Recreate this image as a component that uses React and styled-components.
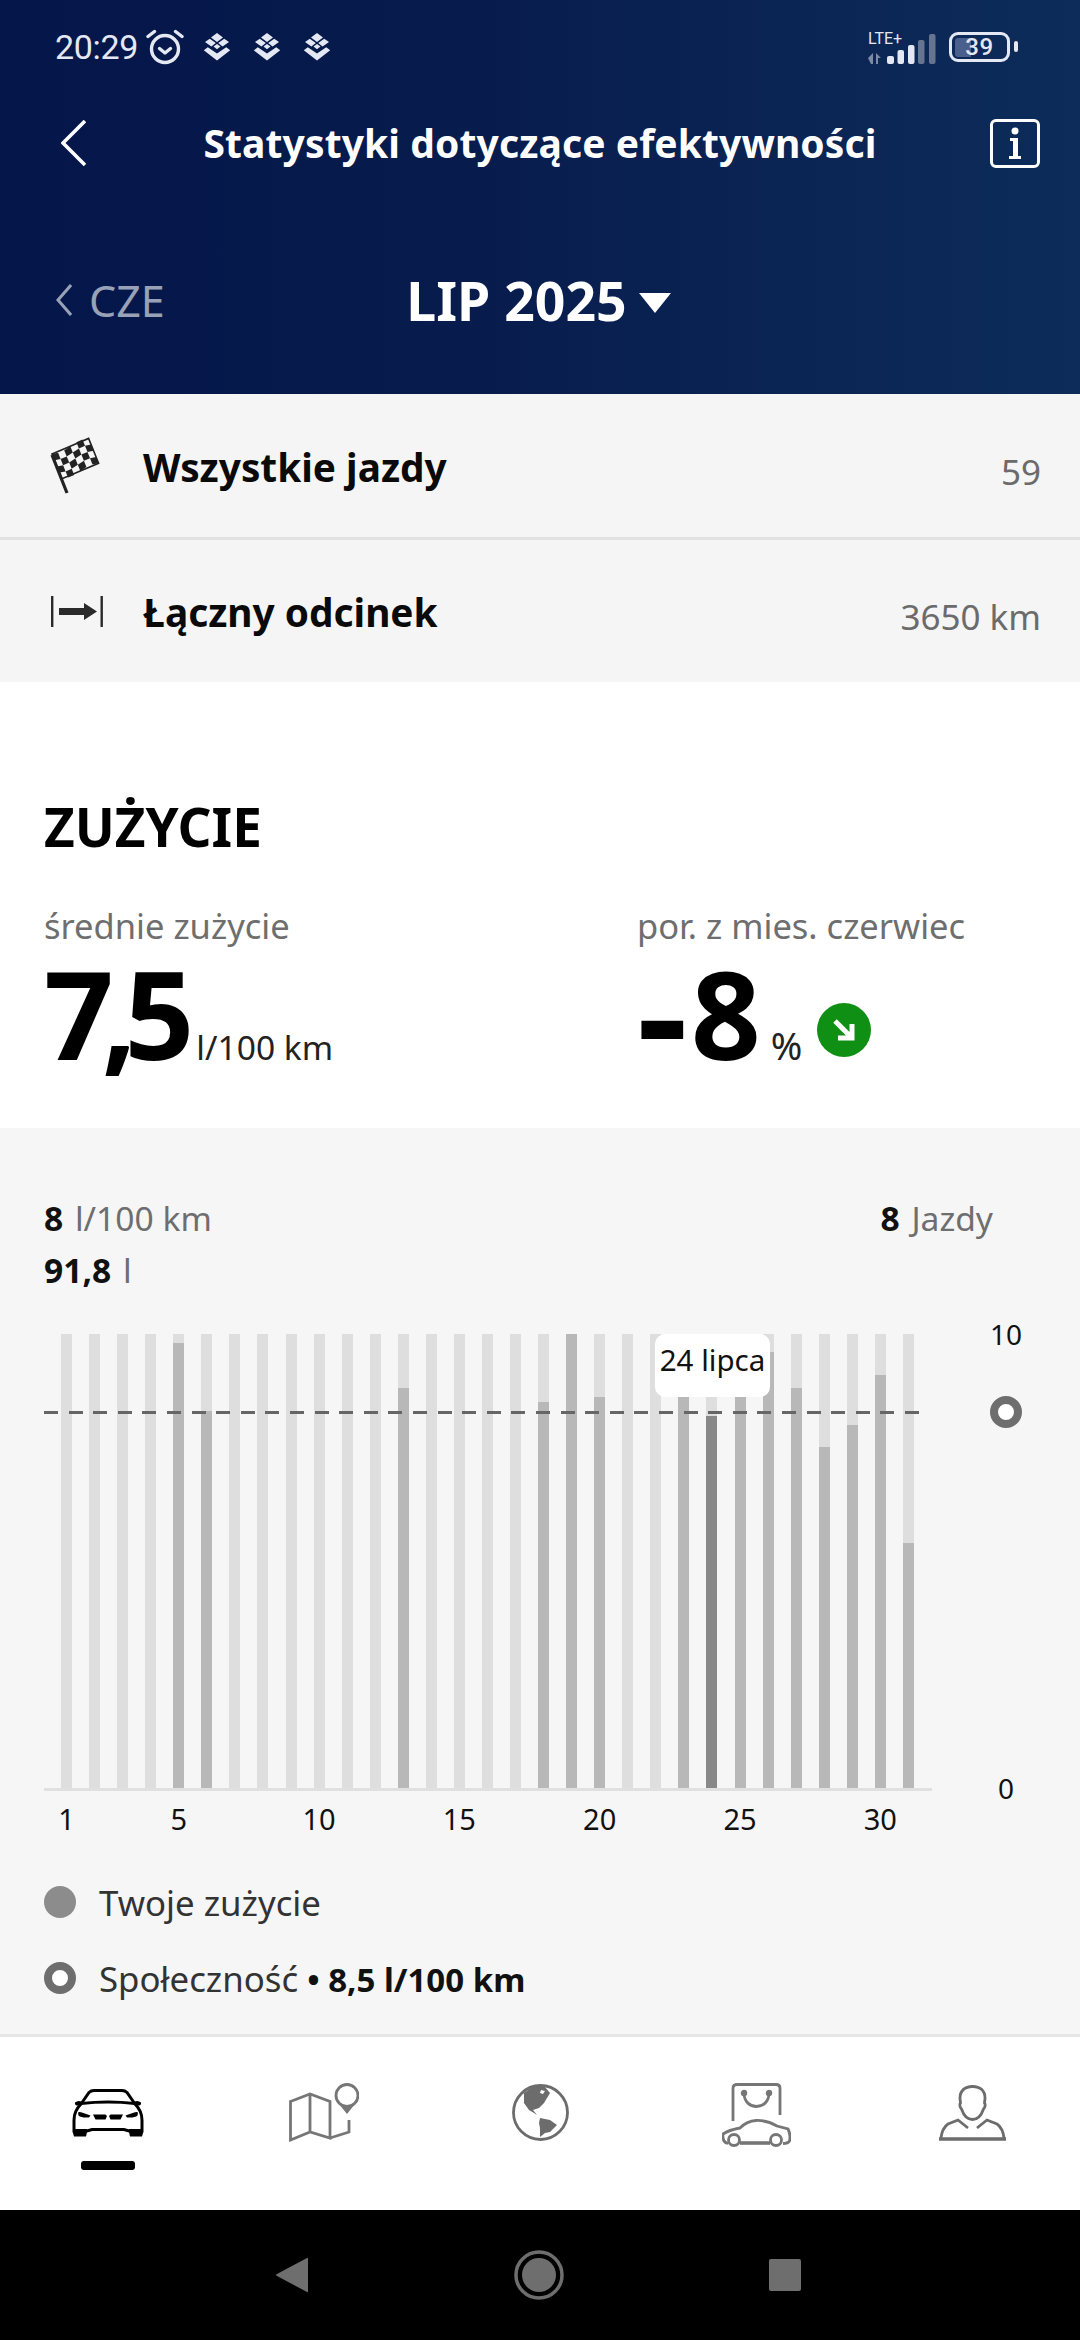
import React from "react";
import styled, { createGlobalStyle } from "styled-components";

const GlobalStyle = createGlobalStyle`
    html, body {
        margin: 0;
        padding: 0;
        background: #000;
    }
    * {
        box-sizing: border-box;
    }
    body {
        font-family: "Noto Sans", "Open Sans", sans-serif;
    }
`

const Pagina = styled.div`
    width: 1080px;
    height: 2340px;
    display: flex;
    flex-direction: column;
    background: #fff;
    overflow: hidden;
`

const Cabecalho = styled.header`
    height: 394px;
    background: linear-gradient(90deg, #05164a 0%, #071b4c 40%, #0d2c5a 100%);
    color: #fff;
    flex-shrink: 0;
`

const StatusBar = styled.div`
    height: 94px;
    padding: 0 70px 0 55px;
    display: flex;
    align-items: center;
    justify-content: space-between;
    color: #e4e8f2;
`

const StatusGroup = styled.div`
    display: flex;
    align-items: center;
`

const Hora = styled.span`
    font-family: Roboto, sans-serif;
    font-size: 34px;
    letter-spacing: -0.3px;
    margin-right: 8px;
`

const StackIcon = styled.svg`
    width: 28px;
    height: 28px;
    margin-left: ${({ $gap }) => $gap}px;
`

const Rede = styled.div`
    display: flex;
    flex-direction: column;
    width: 68px;
    margin-right: 13px;
`

const Lte = styled.span`
    font-family: Roboto, sans-serif;
    font-size: 16px;
    line-height: 15px;
`

const SinalDesenho = styled.svg`
    width: 68px;
    height: 30px;
    margin-top: -12px;
`

const Bateria = styled.div`
    position: relative;
    width: 61px;
    height: 30px;
    border: 3.5px solid #e4e8f2;
    border-radius: 9px;
    display: flex;
    align-items: center;
    justify-content: center;
    font-family: Roboto, sans-serif;
    font-size: 24px;
    font-weight: 500;
    letter-spacing: 0.5px;

    &::before {
        content: "";
        position: absolute;
        left: 2.5px;
        top: 2.5px;
        bottom: 2.5px;
        width: 16px;
        background: #4a5f8c;
        border-radius: 3px 0 0 3px;
    }

    &::after {
        content: "";
        position: absolute;
        right: -10.5px;
        top: 6px;
        width: 4px;
        height: 11px;
        background: #e4e8f2;
        border-radius: 2px;
    }

    span {
        position: relative;
    }
`

const TitleBar = styled.div`
    height: 98px;
    padding: 0 40px 0 40px;
    display: grid;
    grid-template-columns: 1fr auto 1fr;
    align-items: center;
`

const BotaoVoltar = styled.svg`
    margin-left: 21px;
`

const Titulo = styled.h1`
    margin: 0 0 2px;
    font-size: 39px;
    line-height: 1;
    font-weight: 700;
    letter-spacing: 0.1px;
    white-space: nowrap;
`

const InfoBox = styled.div`
    justify-self: end;
    width: 50px;
    height: 49px;
    border: 3px solid #fff;
    border-radius: 6px;
    display: flex;
    align-items: center;
    justify-content: center;
`

const MonthBar = styled.div`
    height: 110px;
    margin-top: 53px;
    padding: 0 56px;
    display: grid;
    grid-template-columns: 1fr auto 1fr;
    align-items: center;
`

const Anterior = styled.div`
    display: flex;
    align-items: center;
    gap: 17px;
    color: #98a1b6;
    font-size: 43px;
`

const MesAtual = styled.div`
    display: flex;
    align-items: center;
    gap: 12px;
    font-size: 53.5px;
    font-weight: 700;
    margin-left: -3px;
`

const Triangulo = styled.span`
    width: 0;
    height: 0;
    border-left: 16px solid transparent;
    border-right: 16px solid transparent;
    border-top: 20px solid #fff;
    margin-top: 6px;
`

const Linha = styled.div`
    height: ${({ $altura }) => $altura}px;
    background: #f5f5f5;
    border-bottom: ${({ $divisor }) => ($divisor ? "3px solid #e2e2e2" : "0")};
    padding: 0 39px 0 50px;
    display: grid;
    grid-template-columns: 93px 1fr auto;
    align-items: center;
    flex-shrink: 0;
`

const LinhaNome = styled.span`
    font-size: 38.8px;
    font-weight: 700;
    color: #0a0a0a;
    margin-top: 2px;
`

const LinhaValor = styled.span`
    font-size: 35px;
    color: #6b6b6b;
    margin-top: 11px;
`

const Consumo = styled.section`
    height: 446px;
    padding: 112px 0 0 44px;
    background: #fff;
    flex-shrink: 0;
`

const ConsumoTitulo = styled.h2`
    margin: 0 0 44px;
    font-size: 53px;
    line-height: 66px;
    font-weight: 700;
    color: #000;
`

const Metricas = styled.div`
    display: grid;
    grid-template-columns: 593px 1fr;
`

const MetricaRotulo = styled.div`
    font-size: 34.5px;
    line-height: 44px;
    color: #6e6e6e;
`

const MetricaLinha = styled.div`
    display: flex;
    align-items: baseline;
    height: 130px;
`

const MetricaNumero = styled.span`
    font-size: 122px;
    line-height: 130px;
    font-weight: 700;
    color: #000;
    letter-spacing: ${({ $aperto }) => $aperto}px;
`

const Menos = styled.span`
    display: inline-block;
    width: 54px;
    transform: scale(1.3, 1.2);
    transform-origin: left center;
`

const MetricaUnidade = styled.span`
    font-size: ${({ $tamanho }) => $tamanho}px;
    color: #222;
    margin-left: ${({ $margem }) => $margem}px;
`

const SetaVerde = styled.span`
    width: 54px;
    height: 54px;
    border-radius: 50%;
    background: #0f8f14;
    display: flex;
    align-items: center;
    justify-content: center;
    align-self: flex-start;
    margin-left: 15px;
    margin-top: 55px;
`

const Painel = styled.section`
    flex: 1;
    background: #f6f6f6;
    padding: 64px 0 0 44px;
`

const Resumo = styled.div`
    display: flex;
    justify-content: space-between;
    padding-right: 87px;
    font-size: 33.6px;
    line-height: 52px;
    color: #6e6e6e;

    b {
        color: #111;
        font-weight: 700;
        margin-right: 3px;
    }
`

const Grafico = styled.div`
    display: grid;
    grid-template-columns: 888px 1fr;
    margin-top: 38px;
`

const Area = styled.div`
    position: relative;
    height: 457px;
    padding-left: 17px;
    display: flex;
    gap: 17.07px;
    border-bottom: 3px solid #e0e0e0;
`

const Barra = styled.div`
    width: 11px;
    height: 454px;
    background: #dedede;
    display: flex;
    align-items: flex-end;
`

const Preenchimento = styled.div`
    width: 100%;
    background: ${({ $ativo }) => ($ativo ? "#888888" : "#b8b8b8")};
`

const Tracejado = styled.div`
    position: absolute;
    left: 0;
    right: 6px;
    top: 77px;
    height: 3px;
    background: repeating-linear-gradient(90deg, #666 0 14px, transparent 14px 24.6px);
`

const Dica = styled.div`
    position: absolute;
    left: 611px;
    top: 0;
    width: 115px;
    height: 63px;
    background: #fff;
    border-radius: 10px;
    display: flex;
    align-items: center;
    justify-content: center;
    font-size: 29.5px;
    color: #111;
    padding-bottom: 13px;
    white-space: nowrap;
`

const EixoY = styled.div`
    height: 454px;
    margin-left: 74px;
    width: 0;
    display: flex;
    flex-direction: column;
    align-items: center;
    font-size: 28px;
    color: #111;
`

const EixoRotulo = styled.span`
    height: 0;
    display: flex;
    align-items: center;
    white-space: nowrap;
    margin-top: ${({ $auto }) => ($auto ? "auto" : "0")};
`

const Anel = styled.span`
    flex-shrink: 0;
    width: 32px;
    height: 32px;
    margin-top: 62px;
    border-radius: 50%;
    border: 8.5px solid #6e6e6e;
    background: #fff;
`

const EixoX = styled.div`
    width: 888px;
    height: 73px;
    padding-left: 17px;
    display: flex;
    gap: 17.07px;
    font-size: 29px;
    color: #111;
`

const Marca = styled.div`
    width: 11px;
    display: flex;
    justify-content: center;
    line-height: 56px;
    white-space: nowrap;
`

const Legenda = styled.div`
    display: flex;
    align-items: center;
    gap: 23px;
    height: 76px;
    font-size: 34.8px;
    color: #333;

    b {
        color: #111;
        font-weight: 700;
        font-size: 33px;
    }
`

const Ponto = styled.span`
    width: 32px;
    height: 32px;
    border-radius: 50%;
    background: ${({ $anel }) => ($anel ? "#fff" : "#8c8c8c")};
    border: ${({ $anel }) => ($anel ? "8.5px solid #6e6e6e" : "0")};
`

const NavInferior = styled.nav`
    height: 176px;
    flex-shrink: 0;
    background: #fff;
    border-top: 3px solid #e6e6e6;
    display: grid;
    grid-template-columns: repeat(5, 216px);
`

const NavItem = styled.div`
    position: relative;
    display: flex;
    justify-content: center;
    align-items: flex-start;
    padding-top: ${({ $topo }) => $topo}px;

    &::after {
        content: "";
        display: ${({ $ativo }) => ($ativo ? "block" : "none")};
        position: absolute;
        left: 81px;
        top: 124px;
        width: 54px;
        height: 9px;
        border-radius: 3px;
        background: #000;
    }
`

const BarraSistema = styled.div`
    height: 130px;
    flex-shrink: 0;
    background: #000;
    display: flex;
    align-items: center;
    justify-content: center;
    gap: 205px;
    padding-right: 4px;
`

const dias = [
    0, 0, 0, 0, 445, 377, 0, 0, 0, 0, 0, 0, 400, 0, 0, 0, 0, 386, 454, 391, 0, 0, 395, 372, 395, 436, 400, 341, 363, 413, 245,
]

const marcas = { 1: "1", 5: "5", 10: "10", 15: "15", 20: "20", 25: "25", 30: "30" }

const IconeAlarme = () => (
    <svg width="38" height="38" viewBox="0 0 38 38" fill="none" stroke="#e4e8f2" strokeWidth="3.4" strokeLinecap="round" strokeLinejoin="round">
        <circle cx="19" cy="21" r="13.5" />
        <path d="M13.5 20.5 19 25l5.500-4.500" />
        <path d="M2 8.500 8.500 3.500M36 8.500 29.500 3.500" />
    </svg>
)

const IconePilha = ({ gap }) => (
    <StackIcon $gap={gap} viewBox="0 0 28 28" fill="#e4e8f2">
        <path d="M14 0l6 4.500-6 4.500-6-4.500z" />
        <path d="M6.800 5.800l6 4.300-4.400 3.300-6.400-4.300zM21.200 5.800l-6 4.300 4.400 3.300 6.400-4.300z" />
        <path d="M14 11l3.500 2.600L14 16.200l-3.500-2.600z" />
        <path d="M.8 17.300l4-3 9.200 6.300 9.200-6.300 4 3L14 27.500z" />
    </StackIcon>
)

const IconeSinal = () => (
    <SinalDesenho viewBox="0 0 68 30">
        <path d="M0 24l5-5v11H3zM8 19l5 5h-3v6H8z" fill="#7e8aa3" />
        <rect x="19" y="22" width="7" height="8" rx="2" fill="#e4e8f2" />
        <rect x="29.500" y="16" width="6.500" height="14" rx="2" fill="#e4e8f2" />
        <rect x="40" y="11" width="6.500" height="19" rx="2" fill="#e4e8f2" />
        <rect x="50" y="6" width="6.500" height="24" rx="2" fill="#66748f" />
        <rect x="61" y="0" width="6.500" height="30" rx="2" fill="#66748f" />
    </SinalDesenho>
)

const Chevron = ({ w, h, color, sw }) => (
    <svg width={w} height={h} viewBox={`0 0 ${w} ${h}`} fill="none" stroke={color} strokeWidth={sw}>
        <path d={`M${w - 1} 1 2 ${h / 2} ${w - 1} ${h - 1}`} />
    </svg>
)

// bandeira quadriculada: cada celula e projetada nos eixos do pano
const IconeBandeira = () => {
    const celulas = []
    const ponto = (i, j) => {
        const onda = Math.sin((i / 6) * Math.PI * 2) * 1.6
        return `${2 + i * 6.1 + j * 2.5},${17 - i * 2.6 + j * 6.2 + onda}`
    }
    for (let i = 0; i < 6; i++) {
        for (let j = 0; j < 4; j++) {
            if ((i + j) % 2 === 0) {
                celulas.push(
                    <polygon key={`${i}-${j}`} points={`${ponto(i, j)} ${ponto(i + 1, j)} ${ponto(i + 1, j + 1)} ${ponto(i, j + 1)}`} />
                )
            }
        }
    }
    return (
        <svg width="50" height="57" viewBox="0 0 50 57" fill="#222">
            {celulas}
            <polygon points={`${ponto(0, 0)} ${ponto(3, 0)} ${ponto(6, 0)} ${ponto(6, 4)} ${ponto(3, 4)} ${ponto(0, 4)}`} fill="none" stroke="#222" strokeWidth="1.6" />
            <path d="M2 18 17 56" stroke="#222" strokeWidth="3.2" />
        </svg>
    )
}

const IconeOdcinek = () => (
    <svg width="54" height="31" viewBox="0 0 54 31" fill="#2a2a2a">
        <rect x="1" y="0" width="2.400" height="31" />
        <rect x="50.500" y="0" width="2.400" height="31" />
        <path d="M9 12h25V7l13 8.500L34 24v-5H9z" />
    </svg>
)

const IconeCarro = () => (
    <svg width="72" height="48" viewBox="0 0 72 48" fill="none" stroke="#000">
        <path d="M9 15 17 3.500Q19 1.500 22 1.500H50Q53 1.500 55 3.500L63 15" strokeWidth="3" />
        <path d="M9 14.500Q36 11.500 63 14.500" strokeWidth="2.800" />
        <path d="M9 15Q2 22 2 31V42H15L20 40.500H52L57 42H70V31Q70 22 63 15" strokeWidth="3" />
        <g fill="#000" stroke="none">
            <path d="M3 13.500Q6 11 9.500 12.500L9 16.500H5Q2.500 16 3 13.500zM69 13.500Q66 11 62.500 12.500L63 16.500H67Q69.500 16 69 13.500z" />
            <path d="M1 40H15V43L14 47.500H2L1 44zM71 40H57V43L58 47.500H70L71 44z" />
            <path d="M6 23.500Q7 22.500 10 23.500L18.500 26.500 17 28.500Q9 29 6.500 26.500zM66 23.500Q65 22.500 62 23.500L53.500 26.500 55 28.500Q63 29 65.500 26.500z" />
            <path d="M21 25.500H33.500L35 27 33.500 30.500H23.500zM51 25.500H38.500L37 27 38.500 30.500H48.500z" />
        </g>
    </svg>
)

const IconeMapa = () => (
    <svg width="70" height="59" viewBox="0 0 70 59" fill="none" stroke="#767676" strokeWidth="2.800">
        <path d="M1.500 18.500 21 11l20 7.500V55L21 49 1.500 57zM21 11v38M41 55l19-6V37" />
        <circle cx="58" cy="12.500" r="11" />
        <path d="M50 21Q58 27 66 21L58 31z" fill="#767676" stroke="none" />
    </svg>
)

const IconeGlobo = () => (
    <svg width="57" height="57" viewBox="0 0 57 57">
        <circle cx="28.500" cy="28.500" r="27" fill="#fff" stroke="#6c6c6c" strokeWidth="2.800" />
        <path d="M12 9 22 2 29 2.500 33 3 38 9 35 14 32 19 27 24 21 26 25 31 22 29 17 26 12 19z" fill="#6c6c6c" />
        <path d="M28 34 38 36 45 41 38 48 33 49 28 53 28 44 27 39z" fill="#6c6c6c" />
        <path d="M29 6l4 1-2 3-3-1z" fill="#fff" />
    </svg>
)

const IconeLoja = () => (
    <svg width="69" height="65" viewBox="0 0 69 65" fill="none" stroke="#767676" strokeWidth="2.800">
        <path d="M11 38V5Q11 1.500 15 1.500H54Q58 1.500 58 5V32" />
        <path d="M22 10C22 28 47 28 47 10" />
        <circle cx="22" cy="10" r="1.800" fill="#767676" />
        <circle cx="47" cy="10" r="1.800" fill="#767676" />
        <path d="M6 60.500Q0 59 1 51 7 47 18 45 25 38 34 37.500 45 37 55 43L66 46Q69 52 67.500 58 66 60.500 61 60.500" />
        <path d="M18 60H48" strokeWidth="3.600" />
        <circle cx="12" cy="57" r="5.500" />
        <circle cx="54" cy="57" r="5.500" />
    </svg>
)

const IconePessoa = () => (
    <svg width="67" height="56" viewBox="0 0 67 56" fill="none" stroke="#6c6c6c" strokeWidth="2.800">
        <path d="M33.500 1.500C41.500 1.500 46 6 46 13 46 15 45.500 17 45.500 18 46.500 19 46.500 22 44.500 24 42.500 30 38.500 34.500 33.500 34.500 28.500 34.500 24.500 30 22.500 24 20.500 22 20.500 19 21.500 18 21.500 17 21 15 21 13 21 6 25.500 1.500 33.500 1.500z" />
        <path d="M29 43 19 35 9 39Q3 43 1.800 54" />
        <path d="M38 43 48 35 58 39Q64 43 65.200 54" />
        <path d="M0 54H67" strokeWidth="3.600" />
    </svg>
)

const Inicio = () => (
    <svg width="34" height="38" viewBox="0 0 34 38">
        <path d="M32 2Q33 1 33 3V35Q33 37 32 36L2 20Q0 19 2 18z" fill="#6e6e6e" />
    </svg>
)

const App = () => {
    return (
        <Pagina>
            <GlobalStyle />
            <Cabecalho>
                <StatusBar>
                    <StatusGroup>
                        <Hora>20:29</Hora>
                        <IconeAlarme />
                        <IconePilha gap={19} />
                        <IconePilha gap={22} />
                        <IconePilha gap={22} />
                    </StatusGroup>
                    <StatusGroup>
                        <Rede>
                            <Lte>LTE+</Lte>
                            <IconeSinal />
                        </Rede>
                        <Bateria><span>39</span></Bateria>
                    </StatusGroup>
                </StatusBar>
                <TitleBar>
                    <BotaoVoltar width="25" height="46" viewBox="0 0 25 46" fill="none" stroke="#fff" strokeWidth="3.600">
                        <path d="M24 1 2 23 24 45" />
                    </BotaoVoltar>
                    <Titulo>Statystyki dotyczące efektywności</Titulo>
                    <InfoBox>
                        <svg width="14" height="32" viewBox="0 0 14 32" fill="#fff">
                            <circle cx="7" cy="4" r="3.500" />
                            <path d="M2 11h8v18h3v3H1v-3h4V14H2z" />
                        </svg>
                    </InfoBox>
                </TitleBar>
                <MonthBar>
                    <Anterior>
                        <Chevron w={16} h={32} color="#98a1b6" sw={3} />
                        CZE
                    </Anterior>
                    <MesAtual>
                        LIP 2025
                        <Triangulo />
                    </MesAtual>
                </MonthBar>
            </Cabecalho>

            <Linha $altura={146} $divisor>
                <IconeBandeira />
                <LinhaNome>Wszystkie jazdy</LinhaNome>
                <LinhaValor>59</LinhaValor>
            </Linha>
            <Linha $altura={142}>
                <IconeOdcinek />
                <LinhaNome>Łączny odcinek</LinhaNome>
                <LinhaValor>3650 km</LinhaValor>
            </Linha>

            <Consumo>
                <ConsumoTitulo>ZUŻYCIE</ConsumoTitulo>
                <Metricas>
                    <div>
                        <MetricaRotulo>średnie zużycie</MetricaRotulo>
                        <MetricaLinha>
                            <MetricaNumero $aperto={-12}>7,5</MetricaNumero>
                            <MetricaUnidade $tamanho={33.6} $margem={14}>l/100 km</MetricaUnidade>
                        </MetricaLinha>
                    </div>
                    <div>
                        <MetricaRotulo>por. z mies. czerwiec</MetricaRotulo>
                        <MetricaLinha>
                            <MetricaNumero $aperto={0}><Menos>-</Menos>8</MetricaNumero>
                            <MetricaUnidade $tamanho={38} $margem={10}>%</MetricaUnidade>
                            <SetaVerde>
                                <svg width="30" height="30" viewBox="0 0 30 30" fill="none" stroke="#fff" strokeWidth="5">
                                    <path d="M6 6 23 23M23 9V23H9" />
                                </svg>
                            </SetaVerde>
                        </MetricaLinha>
                    </div>
                </Metricas>
            </Consumo>

            <Painel>
                <Resumo>
                    <span><b>8</b> l/100 km</span>
                    <span><b>8</b> Jazdy</span>
                </Resumo>
                <Resumo>
                    <span><b>91,8</b> l</span>
                </Resumo>
                <Grafico>
                    <Area>
                        {dias.map((valor, i) => (
                            <Barra key={i}>
                                <Preenchimento $ativo={i === 23} style={{ height: valor }} />
                            </Barra>
                        ))}
                        <Tracejado />
                        <Dica>24 lipca</Dica>
                    </Area>
                    <EixoY>
                        <EixoRotulo>10</EixoRotulo>
                        <Anel />
                        <EixoRotulo $auto>0</EixoRotulo>
                    </EixoY>
                </Grafico>
                <EixoX>
                    {dias.map((_, i) => (
                        <Marca key={i}>{marcas[i + 1]}</Marca>
                    ))}
                </EixoX>
                <Legenda>
                    <Ponto />
                    Twoje zużycie
                </Legenda>
                <Legenda>
                    <Ponto $anel />
                    <span>Społeczność <b>• 8,5 l/100 km</b></span>
                </Legenda>
            </Painel>

            <NavInferior>
                <NavItem $ativo $topo={52}><IconeCarro /></NavItem>
                <NavItem $topo={46}><IconeMapa /></NavItem>
                <NavItem $topo={47}><IconeGlobo /></NavItem>
                <NavItem $topo={46}><IconeLoja /></NavItem>
                <NavItem $topo={48}><IconePessoa /></NavItem>
            </NavInferior>

            <BarraSistema>
                <Inicio />
                <svg width="50" height="50" viewBox="0 0 50 50" fill="#6e6e6e">
                    <circle cx="25" cy="25" r="23" fill="none" stroke="#6e6e6e" strokeWidth="3.500" />
                    <circle cx="25" cy="25" r="17" />
                </svg>
                <svg width="32" height="32" viewBox="0 0 32 32">
                    <rect width="32" height="32" rx="2" fill="#6e6e6e" />
                </svg>
            </BarraSistema>
        </Pagina>
    )
}

export default App
